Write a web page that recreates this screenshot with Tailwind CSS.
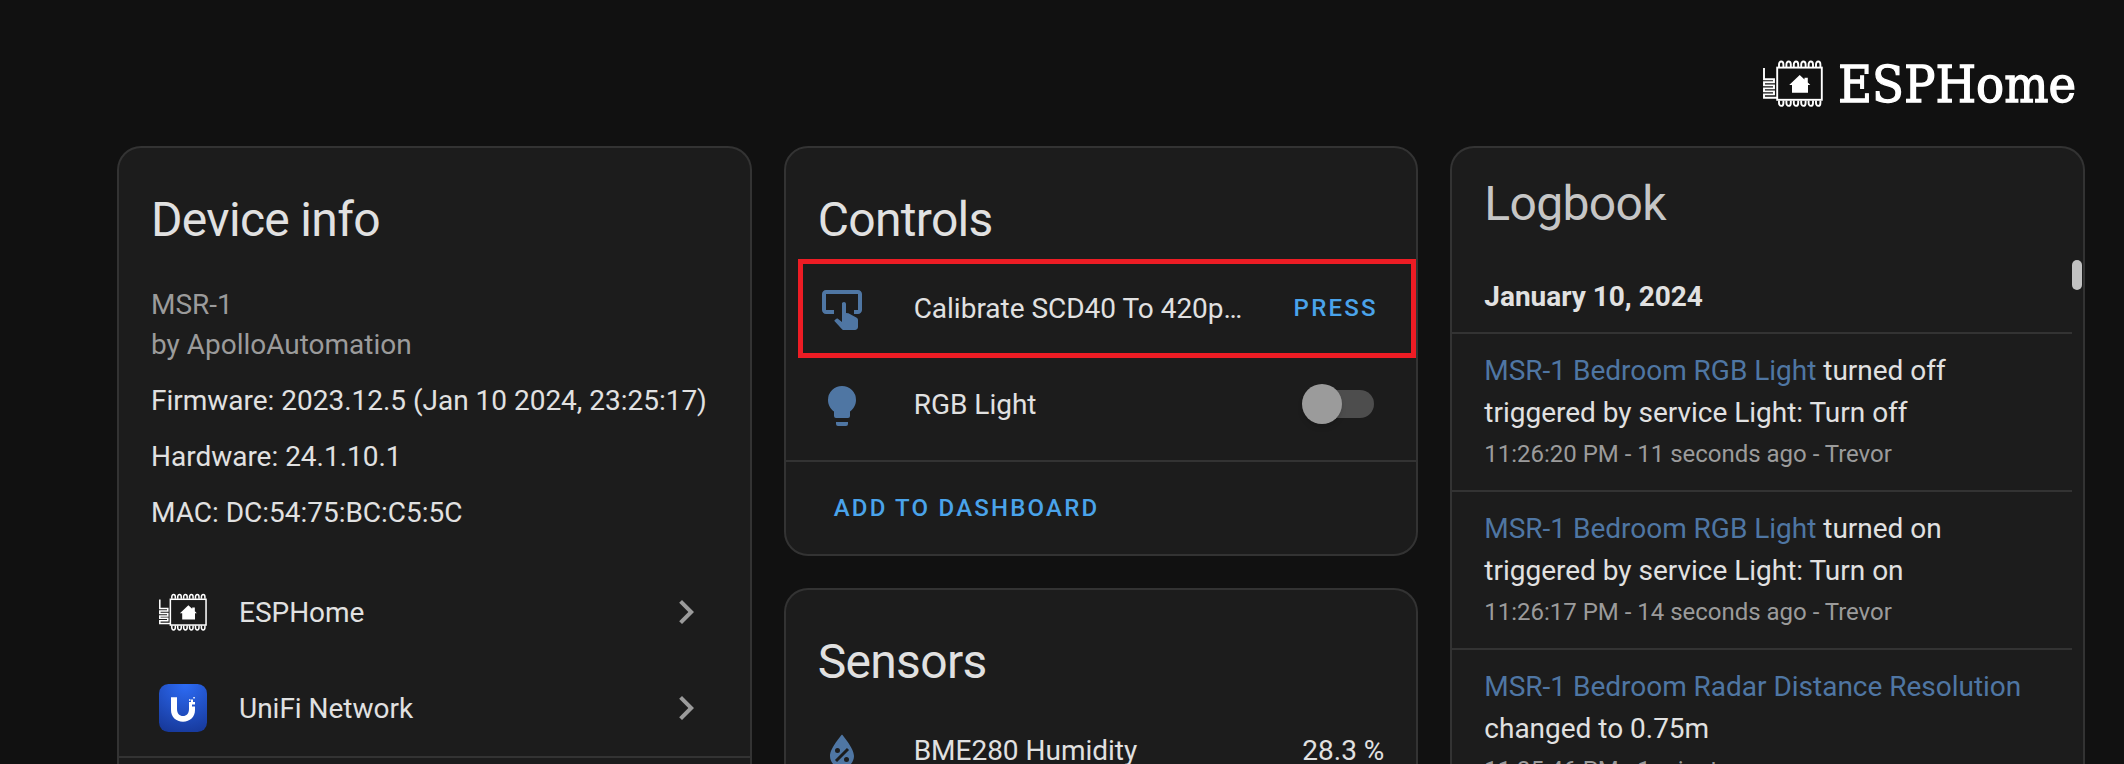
<!DOCTYPE html>
<html lang="en">
<head>
<meta charset="utf-8">
<title>MSR-1 Bedroom</title>
<script src="https://cdn.jsdelivr.net/npm/@tailwindcss/browser@4"></script>
</head>
<body class="h-[764px] w-[2124px] overflow-hidden bg-[#111111] font-[Roboto,sans-serif] text-[28px] leading-[40px] tracking-[-0.015px] text-[#e1e1e1]">
<svg width="0" height="0" class="absolute">
  <defs>
    <symbol id="chip" viewBox="0 0 60 47">
      <g fill="none" stroke="#fff" stroke-width="1.9">
        <rect x="14.2" y="7.6" width="44.6" height="32.2"/>
        <path d="M1 8V19.2H11V22.2H1V25.4H11V28.4H1V31.4H11V34.4H1V37.8H14"/>
        <path id="coils" d="M16 7V4.500a2.200 3 0 0 1 4.400 0V7M23.400 7V4.500a2.200 3 0 0 1 4.400 0V7M30.800 7V4.500a2.200 3 0 0 1 4.400 0V7M38.200 7V4.500a2.200 3 0 0 1 4.400 0V7M45.600 7V4.500a2.200 3 0 0 1 4.400 0V7M53 7V4.500a2.200 3 0 0 1 4.400 0V7"/>
        <use href="#coils" transform="matrix(1 0 0 -1 0 47.4)"/>
      </g>
      <path fill="#fff" d="M36.700 15 41.500 19.500V17.800H44.800V22.600L47.300 25H45V32.800H29V25H26.200Z"/>
    </symbol>
  </defs>
</svg>
<div class="flex h-[764px] flex-col overflow-hidden pl-[117px] pr-[39px]">
  <header class="flex h-[146px] shrink-0 items-start justify-end pt-[60px] pr-[9px]">
    <svg class="h-[47px] w-[60px]"><use href="#chip"/></svg>
    <svg class="ml-[16px] h-[50px] w-[237px] overflow-visible"><text x="-1" y="42" textLength="238" lengthAdjust="spacingAndGlyphs" font-family="DejaVu Serif" font-size="50" fill="#fff" stroke="#fff" stroke-width="1.3">ESPHome</text></svg>
  </header>
  <main class="grid grid-cols-3 gap-8">
    <section class="h-[618px] rounded-t-3xl border-2 border-b-0 border-[#333333] bg-[#1c1c1c]">
      <h1 class="mt-[40px] px-8 text-[48px] leading-[64px] tracking-[-0.014em]">Device info</h1>
      <div class="mt-[33px] px-8">
        <div class="text-[#9b9b9b]">MSR-1<br>by ApolloAutomation</div>
        <div class="mt-4">Firmware: 2023.12.5 (Jan 10 2024, 23:25:17)</div>
        <div class="mt-4">Hardware: 24.1.10.1</div>
        <div class="mt-4">MAC: DC:54:75:BC:C5:5C</div>
      </div>
      <div class="mt-[31px] flex h-24 items-center pl-10 pr-10">
        <svg class="h-[38px] w-[48px]"><use href="#chip"/></svg>
        <span class="ml-8 flex-1 pt-[2px]">ESPHome</span>
        <svg class="size-12" viewBox="0 0 24 24" fill="#9b9b9b"><path d="M8.590 16.580 13.170 12 8.590 7.410 10 6l6 6-6 6-1.410-1.420Z"/></svg>
      </div>
      <div class="flex h-24 items-center pl-10 pr-10">
        <svg class="size-12" viewBox="0 0 48 48">
          <defs><radialGradient id="unifi" cx=".55" cy="0" r="1.050"><stop offset="0" stop-color="#2d6cf6"/><stop offset="1" stop-color="#17399b"/></radialGradient></defs>
          <rect width="48" height="48" rx="9.500" fill="url(#unifi)"/>
          <path fill="#fff" d="M12 13.300h6V25c0 4.500 2.500 7 6 7s6-2.500 6-7V21h3v1.500h3V26c0 7-5 11.700-12 11.700s-12-4.700-12-11.700ZM30 18h3v3h-3ZM33 18h3v2.600h-3ZM30 15.300h1.500v1.500H30ZM34.300 13h1.500v1.500h-1.500ZM32 15.600h2V18h-2Z"/>
        </svg>
        <span class="ml-8 flex-1 pt-[2px]">UniFi Network</span>
        <svg class="size-12" viewBox="0 0 24 24" fill="#9b9b9b"><path d="M8.590 16.580 13.170 12 8.590 7.410 10 6l6 6-6 6-1.410-1.420Z"/></svg>
      </div>
      <hr class="border-t-2 border-[#333333]">
    </section>

    <div class="flex flex-col gap-8">
      <section class="h-[410px] rounded-3xl border-2 border-[#333333] bg-[#1c1c1c]">
        <h1 class="mt-[40px] px-8 text-[48px] leading-[64px] tracking-[-0.014em]">Controls</h1>
        <div class="ml-[12px] mt-[7px] flex h-[99px] w-[618px] items-center border-5 border-[#ed1c24] pl-[15px]">
          <svg class="mt-[3px] size-12 shrink-0" viewBox="0 0 24 24" fill="#4f76a3"><path d="M20 2H4C2.900 2 2 2.900 2 4V12C2 13.100 2.900 14 4 14H8V12H4V4H20V12H18V14H20C21.100 14 22 13.100 22 12V4C22 2.900 21.100 2 20 2M11.960 8.900C12 8.360 12.450 8 13 8S14 8.450 14 9V13.470L15.210 13.600L19.150 15.790C19.680 16.030 20 16.560 20 17.140V20.500C19.970 21.320 19.320 21.970 18.500 22H13C12.620 22 12.260 21.850 12 21.570L8.100 17.370L8.840 16.600C9.030 16.390 9.300 16.280 9.580 16.280H9.800L12 18V9"/></svg>
          <span class="ml-[48px] flex-1 whitespace-nowrap">Calibrate SCD40 To 420p…</span>
          <span class="mr-[33px] pb-[2px] text-[24px] font-medium tracking-[2.200px] text-[#4aa3ea]">PRESS</span>
        </div>
        <div class="flex h-[102px] items-center pb-[6px] pl-8 pr-[42px]">
          <svg class="size-12" viewBox="0 0 24 24" fill="#4f76a3"><path d="M12 2A7 7 0 0 0 5 9C5 11.380 6.190 13.470 8 14.740V17A1 1 0 0 0 9 18H15A1 1 0 0 0 16 17V14.740C17.810 13.470 19 11.380 19 9A7 7 0 0 0 12 2M9 21A1 1 0 0 0 10 22H14A1 1 0 0 0 15 21V20H9V21Z"/></svg>
          <span class="ml-[48px] flex-1 pb-[3px]">RGB Light</span>
          <div class="mb-[4px] flex h-7 w-[68px] items-center rounded-full bg-[#4d4d4d]"><div class="-ml-1 size-10 shrink-0 rounded-full bg-[#9b9b9b] shadow-md"></div></div>
        </div>
        <div class="flex h-[94px] items-center border-t-2 border-[#333333] pl-[48px] text-[24px] font-medium tracking-[2.200px] text-[#4aa3ea]">ADD TO DASHBOARD</div>
      </section>
      <section class="h-[176px] overflow-hidden rounded-t-3xl border-2 border-b-0 border-[#333333] bg-[#1c1c1c]">
        <h1 class="mt-[40px] px-8 text-[48px] leading-[64px] tracking-[-0.014em]">Sensors</h1>
        <div class="mt-[10px] flex h-[96px] items-center px-8">
          <svg class="size-12" viewBox="0 0 24 24" fill="#4f76a3"><path d="M12 3.250S6 10 6 14c0 3.320 2.690 6 6 6s6-2.680 6-6c0-4-6-10.750-6-10.750M14.470 9.970l1.060 1.060-6 6L8.470 15.970l6-6M9.750 10A1.250 1.250 0 0 1 11 11.250 1.250 1.250 0 0 1 9.750 12.500 1.250 1.250 0 0 1 8.500 11.250 1.250 1.250 0 0 1 9.750 10m4.500 4.500a1.250 1.250 0 0 1 1.250 1.250A1.250 1.250 0 0 1 14.250 17 1.250 1.250 0 0 1 13 15.750a1.250 1.250 0 0 1 1.250-1.250Z"/></svg>
          <span class="ml-[48px] flex-1 pb-[3px]">BME280 Humidity</span>
          <span class="pb-[3px]">28.3 %</span>
        </div>
      </section>
    </div>

    <section class="relative h-[618px] overflow-hidden rounded-t-3xl border-2 border-b-0 border-[#333333] bg-[#1c1c1c]">
      <h1 class="mt-[24px] px-8 text-[48px] leading-[64px] tracking-[-0.014em] text-[#c6c6c6]">Logbook</h1>
      <div class="mr-[11px] leading-[42px]">
        <div class="mt-[38px] h-[58px] px-8 pt-[2px] font-bold">January 10, 2024</div>
        <div class="h-[158px] border-t-2 border-[#333333] px-8 pt-[16px]"><span class="text-[#4f76a3]">MSR-1 Bedroom RGB Light</span> turned off<br>triggered by service Light: Turn off<div class="-mt-px text-[24px] text-[#9b9b9b]">11:26:20 PM - 11 seconds ago - Trevor</div></div>
        <div class="h-[158px] border-t-2 border-[#333333] px-8 pt-[16px]"><span class="text-[#4f76a3]">MSR-1 Bedroom RGB Light</span> turned on<br>triggered by service Light: Turn on<div class="-mt-px text-[24px] text-[#9b9b9b]">11:26:17 PM - 14 seconds ago - Trevor</div></div>
        <div class="h-[158px] border-t-2 border-[#333333] px-8 pt-[16px]"><span class="text-[#4f76a3]">MSR-1 Bedroom Radar Distance Resolution</span><br>changed to 0.75m<div class="-mt-px text-[24px] text-[#9b9b9b]">11:25:46 PM - 1 minute ago</div></div>
      </div>
      <div class="absolute right-[1px] top-[112px] h-[30px] w-[10px] rounded-full bg-[#c1c1c1]"></div>
    </section>
  </main>
</div>
</body>
</html>
